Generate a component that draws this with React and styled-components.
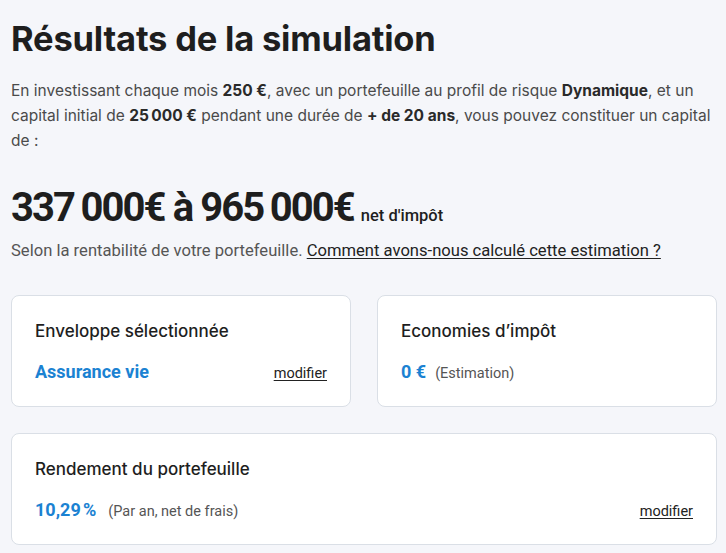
import React from "react";
import styled, { createGlobalStyle } from "styled-components";

const Global = createGlobalStyle`
  html, body { margin: 0; padding: 0; background: #f5f6fa; }
  body { font-family: Inter, "Noto Sans", sans-serif; color: #222; }
`;

const Page = styled.div`
  padding: 14px 9px 0 11px;
  display: flex;
  flex-direction: column;
`;

const Title = styled.h1`
  margin: 0;
  font-family: Inter, sans-serif;
  font-weight: 700;
  font-size: 34.5px;
  line-height: 50px;
  letter-spacing: -0.2px;
  color: #1e1e1e;
`;

const Intro = styled.p`
  margin: 14px 0 0;
  font-size: 15.5px;
  line-height: 25px;
  color: #4a4a4a;
  b { color: #2a2a2a; font-weight: 700; }
`;

const Amount = styled.div`
  margin-top: 33px;
  display: flex;
  align-items: baseline;
  gap: 7px;
`;

const Big = styled.span`
  font-family: Roboto, sans-serif;
  font-weight: 700;
  font-size: 40px;
  letter-spacing: -1.9px;
  color: #1e1e1e;
  line-height: 44px;
`;

const Small = styled.span`
  font-family: Roboto, sans-serif;
  font-size: 16.5px;
  font-weight: 500;
  color: #1e1e1e;
`;

const Note = styled.p`
  margin: 9px 0 0;
  font-family: Roboto, sans-serif;
  font-size: 16.6px;
  line-height: 24px;
  color: #555;
  a { color: #222; text-decoration: underline; text-underline-offset: 2px; }
`;

const Grid = styled.div`
  margin-top: 32px;
  display: grid;
  grid-template-columns: 1fr 1fr;
  gap: 26px;
`;

const Card = styled.div`
  grid-column: ${p => (p.$wide ? "1 / -1" : "auto")};
  background: #fff;
  border: 1px solid #dadfe6;
  border-radius: 8px;
  height: 112px;
  box-sizing: border-box;
  padding: 23px 23px 0;
  display: flex;
  flex-direction: column;
`;

const CardTitle = styled.div`
  font-family: Inter, sans-serif;
  font-weight: 500;
  font-size: 17px;
  line-height: 24px;
  color: #1e1e1e;
`;

const Row = styled.div`
  margin-top: 18px;
  display: flex;
  align-items: baseline;
`;

const Value = styled.span`
  font-family: Roboto, sans-serif;
  font-weight: 700;
  font-size: 18px;
  letter-spacing: ${p => (p.$tight ? "-0.6px" : "0")};
  color: #1b82d2;
`;

const Hint = styled.span`
  margin-left: ${p => p.$gap}px;
  font-family: Roboto, sans-serif;
  font-size: 14.5px;
  color: #555;
`;

const Modify = styled.a`
  margin-left: auto;
  font-family: Roboto, sans-serif;
  font-size: 14.5px;
  color: #222;
  text-decoration: underline;
  text-underline-offset: 2px;
`;

export default function App() {
  return (
    <Page>
      <Global />
      <Title>Résultats de la simulation</Title>
      <Intro>
        En investissant chaque mois <b>250 €</b>, avec un portefeuille au profil de risque <b>Dynamique</b>, et un
        <br />
        capital initial de <b>25{"\u202F"}000 €</b> pendant une durée de <b>+ de 20 ans</b>, vous pouvez constituer un capital
        <br />
        de :
      </Intro>
      <Amount>
        <Big>337{"\u2009"}000€ à 965{"\u2009"}000€</Big>
        <Small>net d'impôt</Small>
      </Amount>
      <Note>
        Selon la rentabilité de votre portefeuille. <a href="#">Comment avons-nous calculé cette estimation ?</a>
      </Note>
      <Grid>
        <Card>
          <CardTitle>Enveloppe sélectionnée</CardTitle>
          <Row>
            <Value>Assurance vie</Value>
            <Modify href="#">modifier</Modify>
          </Row>
        </Card>
        <Card>
          <CardTitle>Economies d’impôt</CardTitle>
          <Row>
            <Value>0 €</Value>
            <Hint $gap={9}>(Estimation)</Hint>
          </Row>
        </Card>
        <Card $wide>
          <CardTitle>Rendement du portefeuille</CardTitle>
          <Row>
            <Value $tight>10,29{"\u202F"}%</Value>
            <Hint $gap={12}>(Par an, net de frais)</Hint>
            <Modify href="#">modifier</Modify>
          </Row>
        </Card>
      </Grid>
    </Page>
  );
}
